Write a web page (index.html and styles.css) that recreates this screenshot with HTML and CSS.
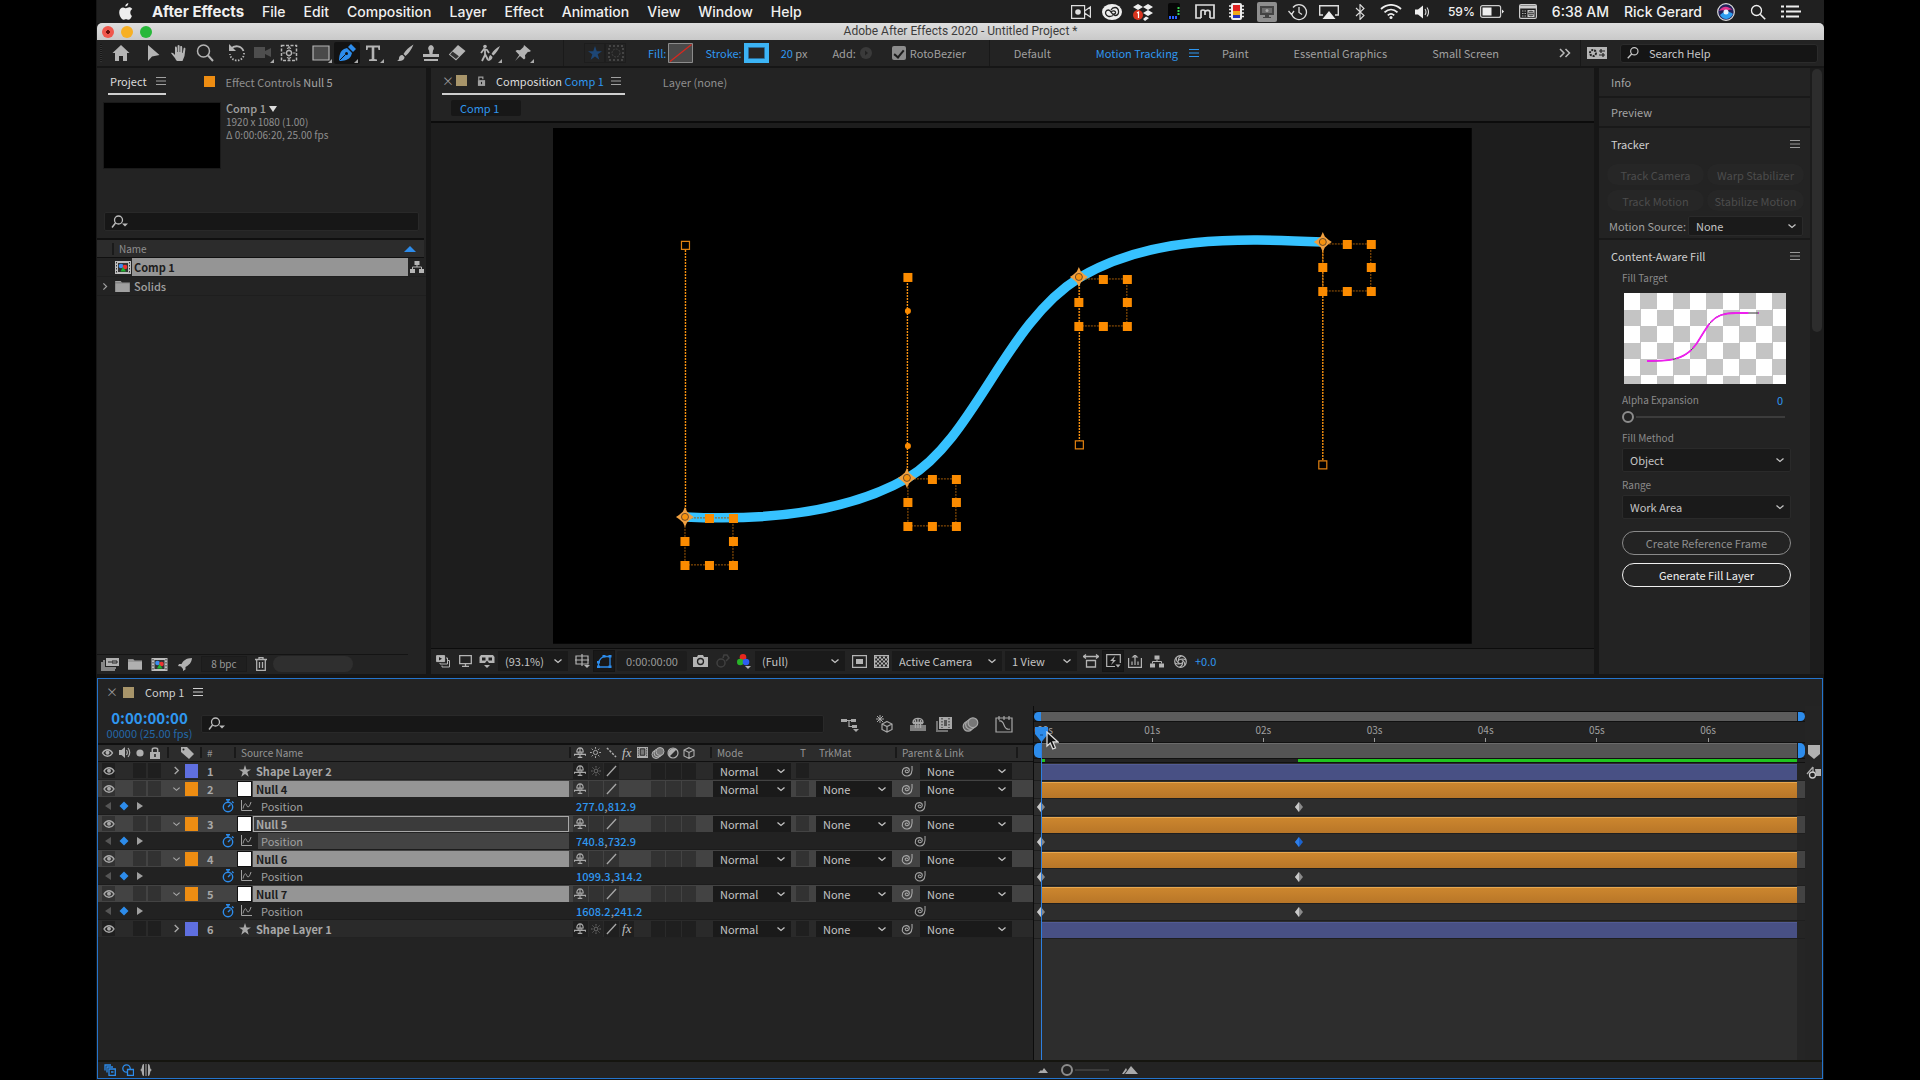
FILE: index.html
```html
<!DOCTYPE html>
<html lang="en">
<head>
<meta charset="utf-8">
<title>Adobe After Effects 2020 - Untitled Project</title>
<link rel="stylesheet" href="styles.css">
</head>
<body>
<svg class="sprite" aria-hidden="true">
  <symbol id="chev" viewBox="0 0 10 10"><path d="M1.500 3.500 5 6.500 8.500 3.500" fill="none" stroke="currentColor" stroke-width="1.300"/></symbol>
  <symbol id="chev-r" viewBox="0 0 10 10"><path d="M3 1 7 5 3 9" fill="none" stroke="currentColor" stroke-width="1.500"/></symbol>
  <symbol id="menu" viewBox="0 0 10 10"><path d="M0 1.500h10M0 5h10M0 8.500h10" stroke="currentColor"/></symbol>
  <symbol id="mag" viewBox="0 0 16 16"><circle cx="9.500" cy="6" r="4.200" fill="none" stroke="currentColor" stroke-width="1.300"/><path d="M6.500 9.200 2 14" stroke="currentColor" stroke-width="1.500"/></symbol>
  <symbol id="magdrop" viewBox="0 0 18 16"><circle cx="7.500" cy="6" r="4" fill="none" stroke="currentColor" stroke-width="1.300"/><path d="M4.500 9 1 13.500" stroke="currentColor" stroke-width="1.500"/><path d="M11 9.500h6l-3 3z" fill="currentColor"/></symbol>
  <symbol id="magr" viewBox="0 0 16 16"><circle cx="6.500" cy="6.500" r="5" fill="none" stroke="currentColor" stroke-width="1.300"/><path d="m10.200 10.200 5 5" stroke="currentColor" stroke-width="1.600"/></symbol>
  <symbol id="eye" viewBox="0 0 12 10"><path d="M1 5c2.500-4.300 7.500-4.300 10 0-2.500 4.300-7.500 4.300-10 0z" fill="none" stroke="currentColor" stroke-width="1.400"/><circle cx="6" cy="4.800" r="2" fill="currentColor"/></symbol>
  <symbol id="shy" viewBox="0 0 12 12"><path d="M2.500 5.500C2.500-.5 9.500-.5 9.500 5.500zM0 9.500V8h12v1.500M6 1v10.500M4 5.500V8M8 5.500V8M3.500 11.300h5" fill="none" stroke="currentColor" stroke-width="1.200"/></symbol>
  <symbol id="sun" viewBox="0 0 12 12"><circle cx="6" cy="6" r="2.300" fill="none" stroke="currentColor"/><path d="M6 0v2M6 10v2M0 6h2M10 6h2M1.800 1.800l1.400 1.400M8.800 8.800l1.400 1.400M10.200 1.800 8.800 3.200M3.200 8.800 1.800 10.200" stroke="currentColor"/></symbol>
  <symbol id="slash" viewBox="0 0 12 12"><path d="M1 11.500 11 .5" stroke="currentColor" stroke-width="1.400"/></symbol>
  <symbol id="bslash" viewBox="0 0 12 12"><path d="m1 1 10 10" stroke="currentColor" stroke-width="1.600" stroke-dasharray="2.500 1.500"/></symbol>
  <symbol id="film" viewBox="0 0 14 12"><path d="M1 0h12v12H1z" fill="currentColor"/><path d="M4.500 2h5v7h-5z" fill="#777" stroke="#222"/><path d="M2.500 1v10M11.500 1v10" stroke="#222" stroke-dasharray="1 1"/></symbol>
  <symbol id="blur" viewBox="0 0 14 12"><circle cx="5" cy="7.500" r="4" fill="#666" stroke="currentColor"/><circle cx="7" cy="6" r="4" fill="#666" stroke="currentColor"/><circle cx="9" cy="4.500" r="4" fill="#777" stroke="currentColor"/></symbol>
  <symbol id="half" viewBox="0 0 12 12"><circle cx="6" cy="6" r="5" fill="none" stroke="currentColor" stroke-width="1.200"/><path d="M2.500 9.500A5 5 0 0 1 9.500 2.500z" fill="currentColor"/></symbol>
  <symbol id="cube" viewBox="0 0 12 12"><path d="M6 .7 11 3v6L6 11.400 1 9V3zM1 3l5 2.500L11 3M6 5.500v6" fill="none" stroke="currentColor" stroke-width="1.100"/></symbol>
  <symbol id="spiral" viewBox="0 0 14 12"><path d="M7.500 6c0-1.600-2.600-1.200-2.300.5.400 2 4.100 1.500 4.100-1.300C9.300 2 4 1.500 2.600 5 1.200 9 4.500 11.300 7.500 11 11.500 10.500 12.500 6 12 1" fill="none" stroke="currentColor" stroke-width="1.100"/></symbol>
  <symbol id="watch" viewBox="0 0 12 14"><circle cx="6" cy="8" r="4.700" fill="none" stroke="currentColor" stroke-width="1.400"/><path d="M4 .8h4M6 1v2.500M6 8l2.500-2.500M10 2.500l1.500 1.500" stroke="currentColor" stroke-width="1.400"/></symbol>
  <symbol id="graph" viewBox="0 0 12 12"><path d="M1.500 0v10.500H12M3 8.500C5 1 6 4 7 6s2.500 1 4-4" fill="none" stroke="currentColor"/></symbol>
  <symbol id="star" viewBox="0 0 12 12"><path d="m6 0 1.500 4.400H12L8.300 7.100 9.700 11.700 6 8.900 2.300 11.700 3.700 7.100 0 4.400h4.500z" fill="currentColor"/></symbol>
  <symbol id="prev" viewBox="0 0 8 10"><path d="M7 1v8L1 5z" fill="currentColor"/></symbol>
  <symbol id="next" viewBox="0 0 8 10"><path d="M1 1v8l6-4z" fill="currentColor"/></symbol>
  <symbol id="dia" viewBox="0 0 10 10"><path d="m5 .5 4.500 4.500L5 9.500.5 5z" fill="currentColor"/></symbol>
  <symbol id="key" viewBox="0 0 10 10"><path d="M5 0 9 5 5 10 1 5z" fill="#8a8a8a"/><path d="M5 0v10L1 5z" fill="#c8c8c8"/></symbol>
  <symbol id="keyblue" viewBox="0 0 10 10"><path d="M5 0 9 5 5 10 1 5z" fill="#1b63cf"/><path d="M5 0v10L1 5z" fill="#2f7fe8"/></symbol>
  <symbol id="folder" viewBox="0 0 16 12"><path d="M0 0h6l1.500 1.500H16V12H0z" fill="currentColor"/><path d="M0 2h16" stroke="#555" stroke-width=".6"/></symbol>
  <symbol id="comp" viewBox="0 0 16 13"><path d="M0 0h16v13H0z" fill="#bdbdbd"/><path d="M3 2h10v9H3z" fill="#333"/><circle cx="6" cy="5" r="2.300" fill="#3a8cf0"/><circle cx="10" cy="6" r="2.300" fill="#e33"/><path d="M5.500 10.500 8 6l3 4.500z" fill="#1eb42d"/><path d="M1.500 1v12M14.500 1v12" stroke="#333" stroke-dasharray="1.500 1.500"/></symbol>
  <symbol id="tree" viewBox="0 0 14 12"><path d="M4.500 0h5v4h-5zM0 8h5v4H0zM9 8h5v4H9z" fill="currentColor"/><path d="M7 4v2M2.500 8V6h9v2" fill="none" stroke="currentColor"/></symbol>
  <symbol id="lock-open" viewBox="0 0 10 12"><path d="M1 5h8v6.500H1z" fill="currentColor"/><path d="M2 5V1.700h4.500V4" fill="none" stroke="currentColor" stroke-width="1.300"/><path d="M5 7v2.500" stroke="#222" stroke-width="1.200"/></symbol>
</svg>

<div class="app">
  <header class="menubar">
    <nav class="menus" aria-label="Menu bar">
      <button class="apple" aria-label="Apple"><svg viewBox="0 0 14 17"><path d="M9.300 0c.2 1.800-1.300 3.600-3 3.600C6.100 1.900 7.600.3 9.300 0zM12.900 12.900c-.8 2-2.100 3.900-3.400 3.900-1 0-1.300-.6-2.500-.6s-1.600.6-2.500.6C2.600 16.800.2 12.900.2 9.300c0-3.200 2-4.900 3.900-4.900 1.200 0 2.200.8 2.900.8s1.900-.9 3.300-.9c1 0 2.200.5 3 1.700-2.800 1.600-2.300 5.700-.4 6.900z" fill="#eee"/></svg></button>
      <button class="appname">After Effects</button><button>File</button><button>Edit</button><button>Composition</button><button>Layer</button><button>Effect</button><button>Animation</button><button>View</button><button>Window</button><button>Help</button>
    </nav>
    <div class="status">
      <span class="st"><svg width="20" height="14" viewBox="0 0 20 14"><path d="M.6.6h13v12.800H.6z M13.600 6l5.800-4v10l-5.800-4" fill="none" stroke="#ddd" stroke-width="1.200"/><circle cx="7" cy="7" r="2.800" fill="#ddd"/></svg></span>
      <span class="st"><svg width="20" height="16" viewBox="0 0 20 16"><ellipse cx="10" cy="8" rx="10" ry="8" fill="#eee"/><path d="M11 11.500C3.500 15.500 1 6 6.500 6c2.500 0 3.500 5.500 6.500 5.500 5.500 0 4-8 0-8-2 0-3.200 1-4 2.500M9 8.500c1-2.500 5-2 4.500.5-.3 1-1.500 1-2 .5" fill="none" stroke="#222" stroke-width="1.300"/></svg></span>
      <span class="st"><svg width="20" height="18" viewBox="0 0 20 18"><path d="m5 1 5 3-5 3-5-3zM15 1l5 3-5 3-5-3zM15 7l5 3-5 3-5-3zM13 13.500l3 1.500-4 3-2-2z" fill="#eee"/><circle cx="5" cy="12" r="5" fill="#d8341e"/><path d="m4 10 1.500-1v6" fill="none" stroke="#fff" stroke-width="1.200"/></svg></span>
      <span class="st"><svg width="16" height="17" viewBox="0 0 16 17"><rect x="2" width="12" height="17" rx="2" fill="#070707"/><path d="M12.500 4v9" stroke="#39d353" stroke-width="2" stroke-dasharray="2 1"/><path d="M3 14.500h8" stroke="#2c63ff" stroke-width="3" stroke-dasharray="2 1"/></svg></span>
      <span class="st"><svg width="20" height="15" viewBox="0 0 20 15"><path d="M6 14H1V1h18v13h-4M6 14V7.500c0-2 4-2 4 0v3.500M10 8c1-2.500 5-2 5 0v6" fill="none" stroke="#ddd" stroke-width="1.700"/></svg></span>
      <span class="st"><svg width="15" height="17" viewBox="0 0 15 17"><path d="M0 3h15M0 6.500h15M0 10h15M0 13.500h15" stroke="#eee" stroke-width="1.500"/><rect x="2" width="11" height="17" rx="2" fill="#eee"/><path d="M4 2h7v6H4z" fill="#e02020"/><path d="M4 8h7v4H4z" fill="#f0a818"/><path d="M4 12h7v3H4z" fill="#2430b8"/></svg></span>
      <span class="st"><svg width="20" height="20" viewBox="0 0 20 20"><rect width="20" height="20" rx="2" fill="#8e8e8e"/><path d="M3 4h14v9H3zM8 13h4v2H8zM6 15h8v1H6z" fill="#444"/><path d="M5 6h10v5H5z" fill="#6d6d6d"/><circle cx="10" cy="8.500" r="1.500" fill="#aaa"/></svg></span>
      <span class="st"><svg width="20" height="18" viewBox="0 0 20 18"><path d="M3.500 10A7.500 7.500 0 1 0 5 4.500M11 4v5.500l3 2M.5 8l3 3.500L6 8" fill="none" stroke="#ddd" stroke-width="1.300"/></svg></span>
      <span class="st"><svg width="20" height="14" viewBox="0 0 20 14"><path d="M4 10H.7V.7h18.600V10H16" fill="none" stroke="#ddd" stroke-width="1.400"/><path d="m10 6 6.500 8h-13z" fill="#eee"/></svg></span>
      <span class="st"><svg width="10" height="16" viewBox="0 0 10 16"><path d="m1 4 8 7.500L5 15.500V.5L9 4.500 1 12" fill="none" stroke="#ddd" stroke-width="1.100"/></svg></span>
      <span class="st"><svg width="22" height="15" viewBox="0 0 22 15"><path d="M1 5c6-5.500 14-5.500 20 0M4.500 8.300c4-3.700 9-3.700 13 0M7.800 11.300c2-1.800 4.400-1.800 6.400 0" fill="none" stroke="#eee" stroke-width="1.800"/><circle cx="11" cy="13.500" r="1.500" fill="#eee"/></svg></span>
      <span class="st"><svg width="14" height="14" viewBox="0 0 14 14"><path d="M0 4.500h3l5-4v13l-5-4H0z" fill="#eee"/><path d="M10 4c1.300 2 1.300 4 0 6M12 2.500c2 3 2 6 0 9" fill="none" stroke="#ddd" stroke-width="1.100"/></svg></span>
      <span class="battery">59%<svg width="24" height="13" viewBox="0 0 24 13"><rect x=".6" y=".6" width="20" height="11.800" rx="2" fill="none" stroke="#ccc" stroke-width="1.200"/><path d="M2.500 2.500h9v8h-9zM22 4.500l2 2-2 2z" fill="#eee"/></svg></span>
      <svg width="18" height="15" viewBox="0 0 18 15"><rect x=".6" y=".6" width="16.800" height="13.800" rx="1.500" fill="none" stroke="#ccc" stroke-width="1.200"/><path d="M1 3h16" stroke="#ccc" stroke-width="3"/><path d="M3 7h4M3 9.500h4M3 12h4" stroke="#aaa" stroke-dasharray="1.500 1"/><path d="M8.500 6h7v7h-7z" fill="#ccc"/><path d="M10 7.500h4v4h-4zM12 6.500v6M9 9.500h6" fill="none" stroke="#333" stroke-width=".7"/></svg>
      <span>6:38 AM</span>
      <span>Rick Gerard</span>
      <svg width="18" height="18" viewBox="0 0 18 18"><circle cx="9" cy="9" r="8.300" fill="#23235c" stroke="#ddd" stroke-width="1.200"/><path d="M2 8c4-6 9-5 14-1-4-1-5 0-7 2-2-2-4-2-7-1z" fill="#e0348e"/><path d="M3 12c4-4 5-3 6-3s3-1 7 2c-2 4-5 5-7 5s-4-1-6-4z" fill="#2c9df0"/><circle cx="9" cy="9" r="2.500" fill="#e8f4ff"/></svg>
      <svg width="16" height="16"><use href="#magr"/></svg>
      <svg width="20" height="13" viewBox="0 0 20 13"><path d="M0 1.500h3M0 6.500h3M0 11.500h3M5 1.500h13M5 6.500h15M5 11.500h13" stroke="#eee" stroke-width="2"/></svg>
    </div>
  </header>

  <div class="titlebar">
    <div class="lights"><i class="red"></i><i class="amber"></i><i class="green"></i></div>
    <h1>Adobe After Effects 2020 - Untitled Project *</h1>
  </div>

  <div class="toolbar">
    <div class="tools">
      <i class="grip"></i>
      <div class="tg"><button aria-label="Home"><svg viewBox="0 0 18 18"><path d="m9 1 8.500 8H15v8h-4v-5H7v5H3V9H.5z" fill="currentColor"/></svg></button></div>
      <div class="tg"><button aria-label="Selection"><svg viewBox="0 0 18 18"><path d="M4 1v16l4-4.500L15.500 11z" fill="currentColor"/></svg></button><button aria-label="Hand"><svg viewBox="0 0 18 18"><path d="M6 16c-1-2.500-3-4-5-7 1.500-1 3 1 4 2V3c1.200-1 1.800 0 2 1v4h.6V1.500c1-1 1.900-.5 2 .5v6h.6V2.500c1-1 1.900-.3 2 .7V9h.5l1-5c1-.7 1.800 0 1.700 1L14.500 12 12.500 17H7z" fill="currentColor"/></svg></button><button aria-label="Zoom"><svg viewBox="0 0 18 18"><circle cx="7.500" cy="7" r="6" fill="none" stroke="currentColor" stroke-width="1.500"/><path d="m12 11.500 5 5.500" stroke="currentColor" stroke-width="2"/></svg></button></div>
      <div class="tg"><button aria-label="Rotate"><svg viewBox="0 0 18 18"><path d="M3 5A7.300 7.300 0 0 1 15.500 7" fill="none" stroke="currentColor" stroke-width="1.800"/><path d="M1 0v7h7z" fill="currentColor"/><path d="M16 9A7 7 0 0 1 2 10" fill="none" stroke="currentColor" stroke-width="1.800" stroke-dasharray="1.500 1.500"/></svg></button><button class="dim more" aria-label="Camera"><svg viewBox="0 0 18 18"><path d="M0 3h11v4l6-3v9l-6-3v4H0z" fill="currentColor"/></svg></button><button aria-label="Pan behind"><svg viewBox="0 0 18 18"><path d="M1.500 1.500h15v15h-15z" fill="none" stroke="currentColor" stroke-width="1.500" stroke-dasharray="3 1.500"/><circle cx="9" cy="9" r="2.500" fill="none" stroke="currentColor" stroke-width="1.300"/><path d="M9 2.500v3M9 12.500v3M2.500 9h3M12.500 9h3M7 5l2-2.500L11 5M7 13l2 2.500 2-2.500" fill="none" stroke="currentColor"/></svg></button></div>
      <div class="tg"><button class="more" aria-label="Rectangle"><svg viewBox="0 0 18 18"><path d="M1 2h16v14H1z" fill="#4a4a4a" stroke="currentColor" stroke-width="1.200"/></svg></button><button class="more on" aria-label="Pen"><svg viewBox="0 0 18 18"><path d="M1 17C1 12 2 7 6 5l3-1 5 5-1 3c-2 4-7 5-12 5z" fill="currentColor"/><path d="m10 3 3-3 5 5-3 3z" fill="currentColor"/><path d="m1.500 16.500 6-6" stroke="#111"/><circle cx="8.500" cy="9.500" r="1.500" fill="#111"/></svg></button><button class="more" aria-label="Type"><svg viewBox="0 0 18 18"><path d="M2 1.500h14V6h-1.500L14 3.500h-3.700V15l2.700.6V17H5v-1.400l2.700-.6V3.500H4L3.500 6H2z" fill="currentColor"/></svg></button></div>
      <div class="tg"><button aria-label="Brush"><svg viewBox="0 0 18 18"><path d="M17.500.5c-5 3-8 6-10 9.500l2 2c3.500-3 6-6.500 8-11.500zM6.500 11l2 2c0 3-3 4.500-7.500 4 2-1 2-2 2-3 0-2 2-3.500 3.500-3z" fill="currentColor"/></svg></button><button aria-label="Clone stamp"><svg viewBox="0 0 18 18"><path d="M9 1a3.300 3.300 0 0 1 2 5.500L10.500 10H17v3H1v-3h6.500L7 6.500A3.300 3.300 0 0 1 9 1zM2 15h14v2H2z" fill="currentColor"/></svg></button><button aria-label="Eraser"><svg viewBox="0 0 18 18"><path d="m10 1 7.500 6L8 16.500.8 10.500z" fill="currentColor"/><path d="M4.600 7.500 2.200 10.500l5.800 4.600 2.900-2.800z" fill="#333"/></svg></button></div>
      <div class="tg wide"><button class="more" aria-label="Roto brush"><svg viewBox="0 0 22 18"><circle cx="6" cy="2.500" r="1.800" fill="currentColor"/><path d="m2 9 3-4 3 1 2 3M6 6v5l-3 6M6 10l3 6" fill="none" stroke="currentColor" stroke-width="1.800"/><path d="M21 2c-4 2-7 5-8.500 8l2 1.500C17 9 19.500 6 21 2zM11.500 11l2 2c0 2-2 4-5 4 1.500-1 1-5 3-6z" fill="currentColor"/></svg></button></div>
      <div class="tg"><button class="more" aria-label="Puppet pin"><svg viewBox="0 0 18 18"><path d="m10 1 7 6-2 1-1-.3-3 3.500.3 3-1.300 1.300-4-3.500-5 5 4.300-6L1.500 7 3 6l3 .2L9.500 3z" fill="currentColor"/></svg></button></div>
    </div>
    <div class="options">
      <div class="modes"><button aria-label="Shape mode"><svg width="14" height="14"><use href="#star"/></svg></button><button class="mask" aria-label="Mask mode"><svg width="16" height="16" viewBox="0 0 16 16"><path d="M1 1h14v14H1z" fill="none" stroke="currentColor" stroke-width="2" stroke-dasharray="2 2"/><circle cx="8" cy="8" r="4" fill="none" stroke="currentColor" stroke-dasharray="2 1"/></svg></button></div>
      <button class="swatchbtn">Fill:<svg width="25" height="20" viewBox="0 0 25 20"><path d="M.5.5h24v19H.5z" fill="#4a4a4a" stroke="#8c8c8c"/><path d="M2 18.500 23.500 1.500" stroke="#d8281e" stroke-width="1.300"/></svg></button>
      <button class="swatchbtn">Stroke:<svg width="25" height="20" viewBox="0 0 25 20"><path d="M2.500 2.500h20v15h-20z" fill="#262626" stroke="#3cb4f5" stroke-width="5"/><path d="M4.500 4.500h16v11h-16z" fill="none" stroke="#2a6f9c"/></svg></button>
      <span class="px"><a href="#">20</a> px</span>
      <span class="add">Add:<svg width="12" height="12" viewBox="0 0 12 12"><circle cx="6" cy="6" r="6" fill="#3a3a3a"/><path d="m5 3.500 3 2.500-3 2.500z" fill="#222"/></svg></span>
      <label class="check"><input type="checkbox" checked>RotoBezier</label>
    </div>
    <nav class="spaces" aria-label="Workspaces">
      <a href="#">Default</a><a href="#" class="cur">Motion Tracking<svg width="10" height="10"><use href="#menu"/></svg></a><a href="#">Paint</a><a href="#">Essential Graphics</a><a href="#">Small Screen</a>
      <button class="overflow" aria-label="More workspaces"><svg width="12" height="10" viewBox="0 0 12 10"><path d="m1 1 4 4-4 4M6.500 1l4 4-4 4" fill="none" stroke="currentColor" stroke-width="1.500"/></svg></button>
    </nav>
    <div class="help">
      <svg width="20" height="12" viewBox="0 0 20 12"><path d="M0 0h20v12H0z" fill="#b5b5b5"/><circle cx="6" cy="6" r="3" fill="none" stroke="#222" stroke-width="2" stroke-dasharray="2 1"/><path d="M12 4h6M12 8h6M14 2v4M16 6v4" stroke="#222" stroke-width="1.200"/></svg>
      <label class="search"><svg width="14" height="14"><use href="#mag"/></svg><input type="text" placeholder="Search Help" aria-label="Search Help"></label>
    </div>
  </div>

  <main class="workspace">
    <section class="panel project">
      <div class="tabs"><div class="tab active first">Project<svg width="10" height="10"><use href="#menu"/></svg></div><div class="tab fxtab"><i class="sq orange"></i><span>Effect Controls <b>Null 5</b></span></div></div>
      <div class="info"><div class="thumb"></div><div><p class="strong">Comp 1<svg width="8" height="8" viewBox="0 0 8 8"><path d="M0 1h8L4 7z" fill="#ddd"/></svg></p><p>1920 x 1080 (1.00)</p><p>Δ 0:00:06:20, 25.00 fps</p></div></div>
      <label class="field find"><svg width="18" height="16"><use href="#magdrop"/></svg><input type="text" aria-label="Search project"></label>
      <div class="listhead"><span>Name</span><svg width="12" height="6" viewBox="0 0 12 6"><path d="M6 0l6 6H0z" fill="#2d8ceb"/></svg></div>
      <ul class="items">
        <li class="sel"><span class="tw"></span><svg width="16" height="13"><use href="#comp"/></svg><span class="nm">Comp 1</span><svg class="flow" width="14" height="12"><use href="#tree"/></svg></li>
        <li><svg class="tw" width="8" height="9"><use href="#chev-r"/></svg><svg width="15" height="11"><use href="#folder"/></svg><span class="nm">Solids</span><span class="flow"></span></li>
      </ul>
      <div class="pfoot">
        <button aria-label="Interpret footage"><svg width="18" height="13" viewBox="0 0 18 13"><path d="M0 4h3v6h11v3H0zM2 2h2v7h11v2H2z" fill="currentColor" opacity=".7"/><path d="M5 0h13v8H5z" fill="currentColor"/><path d="M7 4h3M11 3h5v2h-5z" fill="none" stroke="#222"/></svg></button><button aria-label="New folder"><svg width="14" height="11"><use href="#folder"/></svg></button><button aria-label="New composition"><svg width="17" height="13"><use href="#comp"/></svg></button><button aria-label="Adjust"><svg width="14" height="13" viewBox="0 0 14 13"><path d="M14 0C8 0 5 3 3.500 6H1L0 8l3 .5L5 11v2l2.500-1.500V9C11 7 13.500 5 14 0z" fill="currentColor"/></svg></button>
        <button class="bpc">8 bpc</button>
        <button aria-label="Delete"><svg width="12" height="14" viewBox="0 0 12 14"><path d="M0 2.500h12M4 2.500V.7h4v1.800M1.700 3v10.300h8.600V3M4.500 5v6M7.500 5v6" fill="none" stroke="currentColor" stroke-width="1.300"/></svg></button>
        <i class="hscroll"></i>
      </div>
    </section>

    <section class="panel viewerpanel">
      <div class="tabs"><div class="tab active comp"><span class="x">×</span><i class="sq sand"></i><svg width="9" height="12"><use href="#lock-open"/></svg><span>Composition <a href="#">Comp 1</a></span><svg width="10" height="10"><use href="#menu"/></svg></div><div class="tab">Layer (none)</div></div>
      <div class="crumb"><button>Comp 1</button></div>
      <div class="viewer">
        <svg viewBox="553 128 919 516" class="canvas">
          <defs>
            <g id="nul"><path d="M0 1h48v47H0z" fill="none" stroke="#a35a06" stroke-dasharray="2 1"/><path d="M20-3h9v9h-9zM44-3h9v9h-9zM-4.500 20h9v9h-9zM44 20h9v9h-9zM-4.500 44h9v9h-9zM20 44h9v9h-9zM44 44h9v9h-9z" fill="#fb8b00"/></g>
            <g id="anchor"><path d="m0-10 2 4.500L6-2 9 0 6 2 2 5.500 0 10-2 5.500-6 2-9 0l3-2 4-3.500z" fill="#f0a040"/><circle r="3.500" fill="#f7930f" stroke="#6b4a2a"/></g>
          </defs>
          <path d="M553 128h919v516H553z" fill="#000"/>
          <path d="M685 517C765 521 845 514 908 478 975 438 1005 324 1079 278 1150 236 1235 238 1323 242" fill="none" stroke="#36c2ff" stroke-width="9.500"/>
          <path d="M685.500 250V517M907.500 280V478M1079.500 278V441M1323 242V461" stroke="#f7900f" stroke-width="1.400" stroke-dasharray="2 1"/>
          <use href="#nul" x="685" y="517"/><use href="#nul" x="908" y="478"/><use href="#nul" x="1079" y="278"/><use href="#nul" x="1323" y="243"/>
          <use href="#anchor" x="685" y="517"/><use href="#anchor" x="907" y="478"/><use href="#anchor" x="1079" y="277"/><use href="#anchor" x="1323" y="242"/>
          <path d="M681.500 241.500h8v8h-8zM1075.500 441h8v8h-8zM1319 461h8v8h-8z" fill="none" stroke="#e08010" stroke-width="1.200"/>
          <path d="M903.500 273h9v9h-9z" fill="#fb8b00"/><circle cx="908" cy="311" r="3" fill="#fb8b00"/><circle cx="908" cy="446" r="3" fill="#fb8b00"/>
        </svg>
      </div>
      <div class="vfoot">
        <button aria-label="Always preview"><svg width="14" height="13" viewBox="0 0 14 13"><path d="M.6.6h8v6h-8z" fill="currentColor" stroke="currentColor"/><path d="m3 2 3 1.700L3 5.500z" fill="#222"/><path d="M10 3h1.500v6H4V8M12 5.500h1.500V12H6v-1.500" fill="none" stroke="currentColor"/></svg></button><button aria-label="Primary viewer"><svg width="13" height="12" viewBox="0 0 13 12"><path d="M.7.7h11.600v8H.7zM6.500 9v2M3 11.300h7" fill="none" stroke="currentColor" stroke-width="1.300"/></svg></button><button aria-label="VR"><svg width="16" height="14" viewBox="0 0 16 14"><path d="M2 1h12l1.500 2v6H10L8 6.500 6 9H.5V3zM5 11h6l-3 3z" fill="currentColor"/><path d="M3 3.500h3.500v3H3zM9.500 3.500H13v3H9.500z" fill="#222"/></svg></button>
        <span class="select w70"><select aria-label="Magnification"><option>(93.1%)</option></select><svg><use href="#chev"/></svg></span>
        <button aria-label="Guides"><svg width="15" height="15" viewBox="0 0 15 15"><path d="M1 2h12v8H1zM7 0v12M0 6h14" fill="none" stroke="currentColor" stroke-width="1.200"/><path d="M9 11h6l-3 3z" fill="currentColor"/></svg></button><button class="boxed" aria-label="Mask visibility"><svg width="15" height="13" viewBox="0 0 15 13"><path d="M1.500 12V7C3 4 4 2.500 7 1.500h6V12z" fill="none" stroke="#2d8ceb" stroke-width="1.300"/><path d="M0 10.500h3v2.500H0zM11.500 10.500h3V13h-3zM11.500 0h3v2.500h-3zM5.500 0h3v2.500h-3zM0 6h3v2.500H0z" fill="#2d8ceb"/></svg></button>
        <span class="box time">0:00:00:00</span>
        <button aria-label="Snapshot"><svg width="15" height="12" viewBox="0 0 15 12"><path d="M0 2h4l1-2h5l1 2h4v10H0z" fill="currentColor"/><circle cx="7.500" cy="6.500" r="3" fill="none" stroke="#222" stroke-width="1.300"/></svg></button><button class="dim" aria-label="Show snapshot"><svg width="15" height="14" viewBox="0 0 15 14"><circle cx="6" cy="9" r="4" fill="none" stroke="currentColor" stroke-width="1.500"/><path d="M8 4 9 1h3l2 3-3 3" fill="none" stroke="currentColor" stroke-width="1.500"/></svg></button><button aria-label="Channels"><svg width="15" height="15" viewBox="0 0 15 15"><circle cx="6" cy="3.300" r="3.300" fill="#e8281e"/><circle cx="3.300" cy="8" r="3.300" fill="#28b428"/><circle cx="9" cy="8" r="3.300" fill="#2c5cf0"/><path d="M8 12h6l-3 3z" fill="currentColor"/></svg></button>
        <span class="select w90"><select aria-label="Resolution"><option>(Full)</option></select><svg><use href="#chev"/></svg></span>
        <button aria-label="Region"><svg width="15" height="13" viewBox="0 0 15 13"><path d="M.6.6h13.800v11.800H.6z" fill="none" stroke="currentColor" stroke-width="1.200"/><path d="M4 4h7v5H4z" fill="currentColor"/></svg></button><button aria-label="Transparency"><svg width="15" height="13" viewBox="0 0 15 13"><path d="M.6.6h13.800v11.800H.6z" fill="none" stroke="currentColor" stroke-width="1.200"/><path d="M1 2.500h13M1 6.500h13M1 10.500h13" stroke="currentColor" stroke-width="2" stroke-dasharray="2 2"/><path d="M3 4.500h11M3 8.500h11" stroke="currentColor" stroke-width="2" stroke-dasharray="2 2"/></svg></button>
        <span class="select w110"><select aria-label="Camera view"><option>Active Camera</option></select><svg><use href="#chev"/></svg></span>
        <span class="select w72"><select aria-label="View layout"><option>1 View</option></select><svg><use href="#chev"/></svg></span>
        <button aria-label="Pixel aspect"><svg width="16" height="14" viewBox="0 0 16 14"><path d="M3.500 6.500h9v6.500h-9zM0 2.500h16M3 .5.5 2.500 3 4.500M13 .5l2.500 2-2.500 2" fill="none" stroke="currentColor" stroke-width="1.300"/></svg></button><button class="boxed" aria-label="Fast previews"><svg width="15" height="14" viewBox="0 0 15 14"><path d="M9 12.500H.7V.7h13.600V9" fill="none" stroke="currentColor" stroke-width="1.200"/><path d="M9 2 4 7h3l-2 4 5-5H7.500z" fill="currentColor"/><path d="M9.500 10.500h5l-2.500 3z" fill="currentColor"/></svg></button><button aria-label="Timeline"><svg width="14" height="13" viewBox="0 0 14 13"><path d="M.6 3v9.400h12.800V3M4 6.500V10M7 2v8M10 6.500V10M5 2l2-2 2 2z" fill="none" stroke="currentColor" stroke-width="1.200"/></svg></button><button aria-label="Flowchart"><svg width="14" height="13"><use href="#tree"/></svg></button>
        <button class="exposure"><svg width="13" height="13" viewBox="0 0 13 13"><circle cx="6.500" cy="6.500" r="5.800" fill="none" stroke="currentColor" stroke-width="1.200"/><path d="M7.500.8C5 2 4 3.500 4.500 6.500M12 5C9.500 3.500 7.500 3.500 5 5M10.800 10.500C11 7.700 10 6 7.500 4.500M5.500 12.200C8 11 9 9.500 8.500 6.500M1 8c2.500 1.500 4.500 1.500 7 0M2.200 2.500C2 5.300 3 7 5.500 8.500" fill="none" stroke="currentColor" stroke-width="1.100"/></svg><span>+0.0</span></button>
      </div>
    </section>

    <aside class="side">
      <div class="stack">
        <h2 class="closed">Info</h2>
        <h2 class="closed">Preview</h2>
        <section class="tracker">
          <h2>Tracker<svg width="10" height="10"><use href="#menu"/></svg></h2>
          <div class="btns"><button disabled>Track Camera</button><button disabled>Warp Stabilizer</button><button disabled>Track Motion</button><button disabled>Stabilize Motion</button></div>
          <div class="source"><label for="ms">Motion Source:</label><span class="select"><select id="ms"><option>None</option></select><svg><use href="#chev"/></svg></span></div>
        </section>
        <section class="caf">
          <h2>Content-Aware Fill<svg width="10" height="10"><use href="#menu"/></svg></h2>
          <div class="cafbody">
            <p>Fill Target</p>
            <svg class="target" viewBox="0 0 162 91"><path d="M23 68C50 68 62 66 73 50 86 30 88 20 112 20H135" fill="none" stroke="#333" stroke-width="1"/><path d="M23 68C50 68 62 66 73 50 86 30 88 20 112 20H135" fill="none" stroke="#ee1fee" stroke-width="1.800" stroke-dasharray="26 3 18 2 30 2 40 10"/></svg>
            <div class="alpha"><label for="ae">Alpha Expansion</label><output for="ae">0</output></div>
            <input id="ae" type="range" min="0" max="100" value="0">
            <label for="fm">Fill Method</label>
            <span class="select big"><select id="fm"><option>Object</option></select><svg><use href="#chev"/></svg></span>
            <label for="rg">Range</label>
            <span class="select big"><select id="rg"><option>Work Area</option></select><svg><use href="#chev"/></svg></span>
            <div class="actions"><button class="pill">Create Reference Frame</button>
            <button class="pill hot">Generate Fill Layer</button></div>
          </div>
        </section>
      </div>
      <div class="vscroll"><i></i></div>
    </aside>
  </main>

  <section class="timeline">
    <div class="tltabs"><span class="x">×</span><i class="sq sand"></i><span>Comp 1</span><svg width="10" height="10"><use href="#menu"/></svg></div>
    <div class="tlbody">
      <div class="layers">
        <div class="controls">
          <div class="clock"><strong>0:00:00:00</strong><span>00000 (25.00 fps)</span></div>
          <label class="field"><svg width="18" height="16"><use href="#magdrop"/></svg><input type="text" aria-label="Search layers"></label>
          <div class="sw">
            <button aria-label="Mini-flowchart"><svg width="18" height="15" viewBox="0 0 18 15"><path d="M0 2h6v3H0zM10 2h5v3h-5zM11 8h5v3h-5z" fill="currentColor"/><path d="M4 3.500h8M8 3.500v6h4" fill="none" stroke="currentColor" stroke-width="1.200"/><path d="M12 12h6l-3 3z" fill="currentColor"/></svg></button>
            <button aria-label="Draft 3D"><svg width="18" height="18" viewBox="0 0 18 18"><path d="m12 6.500 5 2.500v5.500l-5 2.500-5-2.500V9zM7 9l5 2.500L17 9M12 11.500V17" fill="none" stroke="currentColor" stroke-width="1.200"/><path d="M5 0v8M1 4h8M2 1l6 6M8 1 2 7" stroke="currentColor"/></svg></button>
            <button aria-label="Hide shy"><svg width="16" height="14" viewBox="0 0 16 14"><path d="M0 8h16v6H0z" fill="currentColor" opacity=".7"/><path d="M3 5.500C3 0 13 0 13 5.500zM3 6.500h10M8 1v10M5.500 3v8M10.500 3v8" fill="none" stroke="currentColor" stroke-width="1.400"/></svg></button>
            <button aria-label="Frame blending"><svg width="16" height="15" viewBox="0 0 16 15"><path d="M0 4h2v9h10v2H0z" fill="currentColor" opacity=".6"/><path d="M3 0h13v12H3z" fill="currentColor"/><path d="M6 1v10M13 1v10" stroke="#222" stroke-dasharray="1.500 1.500"/><path d="M8 3h3v6H8z" fill="#555"/></svg></button>
            <button aria-label="Motion blur"><svg width="17" height="15"><use href="#blur"/></svg></button>
            <button aria-label="Graph editor"><svg width="18" height="17" viewBox="0 0 18 17"><path d="M1 2h16v14H1zM4 5c3-1 4 1 5 4s3 5 6 4M4 0v4M9 0v4M14 0v4" fill="none" stroke="currentColor" stroke-width="1.200"/></svg></button>
          </div>
        </div>
        <table>
          <colgroup><col class="c19"><col class="c15"><col class="c15"><col class="c20"><col class="c33"><col class="c34"><col class="c335"><col class="c141"><col class="c85"><col class="c19"><col class="c81"><col class="c121"><col class="c17"></colgroup>
          <thead><tr>
            <th><svg width="13" height="10"><use href="#eye"/></svg></th>
            <th><svg width="12" height="11" viewBox="0 0 12 11"><path d="M0 3h2.500L6 0v11L2.500 8H0z" fill="currentColor"/><path d="M7.500 3c1 1.500 1 3.500 0 5M9 1c2.300 3 2.300 6 0 9" fill="none" stroke="currentColor" stroke-width="1.200"/></svg></th>
            <th><svg width="8" height="8" viewBox="0 0 8 8"><circle cx="4" cy="4" r="3.600" fill="currentColor"/></svg></th>
            <th class="lk"><svg width="10" height="12" viewBox="0 0 10 12"><path d="M0 5h10v7H0z" fill="currentColor"/><path d="M2.300 5V2.500c0-2 5.400-2 5.400 0V5" fill="none" stroke="currentColor" stroke-width="1.500"/><path d="M5 7v3" stroke="#222" stroke-width="1.500"/></svg></th>
            <th><div class="hd tag"><svg width="13" height="12" viewBox="0 0 13 12"><path d="M0 0h6l7 7-5 5-8-7z" fill="currentColor"/><circle cx="2.500" cy="2.500" r="1" fill="#222"/></svg></div></th>
            <th><div class="hd">#</div></th>
            <th><div class="hd">Source Name</div></th>
            <th><div class="hd"><div class="switches"><i><svg width="12" height="11"><use href="#shy"/></svg></i><i><svg width="11" height="11"><use href="#sun"/></svg></i><i><svg width="11" height="11"><use href="#bslash"/></svg></i><i class="fx">fx</i><i><svg width="13" height="11"><use href="#film"/></svg></i><i><svg width="14" height="12"><use href="#blur"/></svg></i><i><svg width="12" height="12"><use href="#half"/></svg></i><i><svg width="12" height="12"><use href="#cube"/></svg></i></div></div></th>
            <th><div class="hd">Mode</div></th>
            <th class="tm">T</th>
            <th class="tm">TrkMat</th>
            <th><div class="hd">Parent &amp; Link</div></th>
            <th><div class="hd"></div></th>
          </tr></thead>
          <tbody>
            <tr class="layer"><td><i class="bx"><svg width="12" height="10"><use href="#eye"/></svg></i></td><td></td><td><i class="bx"></i></td><td><i class="bx"></i></td><td><div class="lab"><svg width="9" height="9"><use href="#chev-r"/></svg><i class="chip violet"></i></div></td><td class="num">1</td><td><div class="src"><i class="kind"><svg width="12" height="12"><use href="#star"/></svg></i><span>Shape Layer 2</span></div></td><td><div class="switches"><i class="b"><svg width="12" height="11"><use href="#shy"/></svg></i><i class="b faint"><svg width="10" height="10"><use href="#sun"/></svg></i><i class="b"><svg width="11" height="12"><use href="#slash"/></svg></i><i></i><i></i><i class="b"></i><i class="b"></i><i class="b"></i></div></td><td><span class="select mode"><select aria-label="Mode 1"><option>Normal</option></select><svg><use href="#chev"/></svg></span></td><td><i class="bx"></i></td><td></td><td><div class="parent"><svg width="14" height="12"><use href="#spiral"/></svg><span class="select"><select aria-label="Parent 1"><option>None</option></select><svg><use href="#chev"/></svg></span></div></td><td></td></tr>

            <tr class="layer sel"><td><i class="bx"><svg width="12" height="10"><use href="#eye"/></svg></i></td><td></td><td><i class="bx"></i></td><td><i class="bx"></i></td><td><div class="lab"><svg width="10" height="10"><use href="#chev"/></svg><i class="chip orange"></i></div></td><td class="num">2</td><td><div class="src"><i class="kind null"></i><span class="lit">Null 4</span></div></td><td><div class="switches"><i class="b"><svg width="12" height="11"><use href="#shy"/></svg></i><i class="b"></i><i class="b"><svg width="11" height="12"><use href="#slash"/></svg></i><i></i><i></i><i class="b"></i><i class="b"></i><i class="b"></i></div></td><td><span class="select mode"><select aria-label="Mode 2"><option>Normal</option></select><svg><use href="#chev"/></svg></span></td><td><i class="bx"></i></td><td><span class="select trk"><select aria-label="Matte 2"><option>None</option></select><svg><use href="#chev"/></svg></span></td><td><div class="parent"><svg width="14" height="12"><use href="#spiral"/></svg><span class="select"><select aria-label="Parent 2"><option>None</option></select><svg><use href="#chev"/></svg></span></div></td><td></td></tr>
            <tr class="prop"><td colspan="4"><div class="keys"><svg class="off"><use href="#prev"/></svg><svg class="cur"><use href="#dia"/></svg><svg><use href="#next"/></svg></div></td><td colspan="2"><svg class="sw1" width="12" height="14"><use href="#watch"/></svg></td><td><div class="pn"><svg width="12" height="12"><use href="#graph"/></svg><span>Position</span></div></td><td colspan="4" class="val"><a href="#">277.0</a>,<a href="#">812.9</a></td><td><svg class="pw" width="14" height="12"><use href="#spiral"/></svg></td><td></td></tr>

            <tr class="layer sel"><td><i class="bx"><svg width="12" height="10"><use href="#eye"/></svg></i></td><td></td><td><i class="bx"></i></td><td><i class="bx"></i></td><td><div class="lab"><svg width="10" height="10"><use href="#chev"/></svg><i class="chip orange"></i></div></td><td class="num">3</td><td><div class="src"><i class="kind null"></i><span class="framed">Null 5</span></div></td><td><div class="switches"><i class="b"><svg width="12" height="11"><use href="#shy"/></svg></i><i class="b"></i><i class="b"><svg width="11" height="12"><use href="#slash"/></svg></i><i></i><i></i><i class="b"></i><i class="b"></i><i class="b"></i></div></td><td><span class="select mode"><select aria-label="Mode 3"><option>Normal</option></select><svg><use href="#chev"/></svg></span></td><td><i class="bx"></i></td><td><span class="select trk"><select aria-label="Matte 3"><option>None</option></select><svg><use href="#chev"/></svg></span></td><td><div class="parent"><svg width="14" height="12"><use href="#spiral"/></svg><span class="select"><select aria-label="Parent 3"><option>None</option></select><svg><use href="#chev"/></svg></span></div></td><td></td></tr>
            <tr class="prop"><td colspan="4"><div class="keys"><svg class="off"><use href="#prev"/></svg><svg class="cur"><use href="#dia"/></svg><svg><use href="#next"/></svg></div></td><td colspan="2"><svg class="sw1" width="12" height="14"><use href="#watch"/></svg></td><td><div class="pn picked"><svg width="12" height="12"><use href="#graph"/></svg><span>Position</span></div></td><td colspan="4" class="val"><a href="#">740.8</a>,<a href="#">732.9</a></td><td><svg class="pw" width="14" height="12"><use href="#spiral"/></svg></td><td></td></tr>

            <tr class="layer sel"><td><i class="bx"><svg width="12" height="10"><use href="#eye"/></svg></i></td><td></td><td><i class="bx"></i></td><td><i class="bx"></i></td><td><div class="lab"><svg width="10" height="10"><use href="#chev"/></svg><i class="chip orange"></i></div></td><td class="num">4</td><td><div class="src"><i class="kind null"></i><span class="lit">Null 6</span></div></td><td><div class="switches"><i class="b"><svg width="12" height="11"><use href="#shy"/></svg></i><i class="b"></i><i class="b"><svg width="11" height="12"><use href="#slash"/></svg></i><i></i><i></i><i class="b"></i><i class="b"></i><i class="b"></i></div></td><td><span class="select mode"><select aria-label="Mode 4"><option>Normal</option></select><svg><use href="#chev"/></svg></span></td><td><i class="bx"></i></td><td><span class="select trk"><select aria-label="Matte 4"><option>None</option></select><svg><use href="#chev"/></svg></span></td><td><div class="parent"><svg width="14" height="12"><use href="#spiral"/></svg><span class="select"><select aria-label="Parent 4"><option>None</option></select><svg><use href="#chev"/></svg></span></div></td><td></td></tr>
            <tr class="prop"><td colspan="4"><div class="keys"><svg class="off"><use href="#prev"/></svg><svg class="cur"><use href="#dia"/></svg><svg><use href="#next"/></svg></div></td><td colspan="2"><svg class="sw1" width="12" height="14"><use href="#watch"/></svg></td><td><div class="pn"><svg width="12" height="12"><use href="#graph"/></svg><span>Position</span></div></td><td colspan="4" class="val"><a href="#">1099.3</a>,<a href="#">314.2</a></td><td><svg class="pw" width="14" height="12"><use href="#spiral"/></svg></td><td></td></tr>

            <tr class="layer sel"><td><i class="bx"><svg width="12" height="10"><use href="#eye"/></svg></i></td><td></td><td><i class="bx"></i></td><td><i class="bx"></i></td><td><div class="lab"><svg width="10" height="10"><use href="#chev"/></svg><i class="chip orange"></i></div></td><td class="num">5</td><td><div class="src"><i class="kind null"></i><span class="lit">Null 7</span></div></td><td><div class="switches"><i class="b"><svg width="12" height="11"><use href="#shy"/></svg></i><i class="b"></i><i class="b"><svg width="11" height="12"><use href="#slash"/></svg></i><i></i><i></i><i class="b"></i><i class="b"></i><i class="b"></i></div></td><td><span class="select mode"><select aria-label="Mode 5"><option>Normal</option></select><svg><use href="#chev"/></svg></span></td><td><i class="bx"></i></td><td><span class="select trk"><select aria-label="Matte 5"><option>None</option></select><svg><use href="#chev"/></svg></span></td><td><div class="parent"><svg width="14" height="12"><use href="#spiral"/></svg><span class="select"><select aria-label="Parent 5"><option>None</option></select><svg><use href="#chev"/></svg></span></div></td><td></td></tr>
            <tr class="prop"><td colspan="4"><div class="keys"><svg class="off"><use href="#prev"/></svg><svg class="cur"><use href="#dia"/></svg><svg><use href="#next"/></svg></div></td><td colspan="2"><svg class="sw1" width="12" height="14"><use href="#watch"/></svg></td><td><div class="pn"><svg width="12" height="12"><use href="#graph"/></svg><span>Position</span></div></td><td colspan="4" class="val"><a href="#">1608.2</a>,<a href="#">241.2</a></td><td><svg class="pw" width="14" height="12"><use href="#spiral"/></svg></td><td></td></tr>

            <tr class="layer"><td><i class="bx"><svg width="12" height="10"><use href="#eye"/></svg></i></td><td></td><td><i class="bx"></i></td><td><i class="bx"></i></td><td><div class="lab"><svg width="9" height="9"><use href="#chev-r"/></svg><i class="chip violet"></i></div></td><td class="num">6</td><td><div class="src"><i class="kind"><svg width="12" height="12"><use href="#star"/></svg></i><span>Shape Layer 1</span></div></td><td><div class="switches"><i class="b"><svg width="12" height="11"><use href="#shy"/></svg></i><i class="b faint"><svg width="10" height="10"><use href="#sun"/></svg></i><i class="b"><svg width="11" height="12"><use href="#slash"/></svg></i><i class="b fx">fx</i><i></i><i class="b"></i><i class="b"></i><i class="b"></i></div></td><td><span class="select mode"><select aria-label="Mode 6"><option>Normal</option></select><svg><use href="#chev"/></svg></span></td><td><i class="bx"></i></td><td><span class="select trk"><select aria-label="Matte 6"><option>None</option></select><svg><use href="#chev"/></svg></span></td><td><div class="parent"><svg width="14" height="12"><use href="#spiral"/></svg><span class="select"><select aria-label="Parent 6"><option>None</option></select><svg><use href="#chev"/></svg></span></div></td><td></td></tr>
          </tbody>
        </table>
      </div>

      <div class="time-area">
        <div class="navi"><i></i><b></b><i class="r"></i></div>
        <div class="ruler"><div class="scale">
          <span style="left:0%">0:00s</span><span style="left:14.71%">01s</span><span style="left:29.41%">02s</span><span style="left:44.12%">03s</span><span style="left:58.82%">04s</span><span style="left:73.53%">05s</span><span style="left:88.24%">06s</span>
        </div></div>
        <div class="navi work"><i></i><b></b><i class="r"></i></div>
        <div class="cache"><i style="width:.5%"></i><i style="width:66%"></i></div>
        <div class="tracks">
          <div class="tr"><i class="bar violet"></i></div>
          <div class="tr sel"><i class="bar orange"></i></div>
          <div class="tr p"><div class="scale"><svg style="left:0%"><use href="#key"/></svg><svg style="left:34.1%"><use href="#key"/></svg></div></div>
          <div class="tr sel"><i class="bar orange"></i></div>
          <div class="tr p"><div class="scale"><svg style="left:0%"><use href="#key"/></svg><svg style="left:34.1%"><use href="#keyblue"/></svg></div></div>
          <div class="tr sel"><i class="bar orange"></i></div>
          <div class="tr p"><div class="scale"><svg style="left:0%"><use href="#key"/></svg><svg style="left:34.1%"><use href="#key"/></svg></div></div>
          <div class="tr sel"><i class="bar orange"></i></div>
          <div class="tr p"><div class="scale"><svg style="left:0%"><use href="#key"/></svg><svg style="left:34.1%"><use href="#key"/></svg></div></div>
          <div class="tr"><i class="bar violet"></i></div>
        </div>
        <div class="playhead"><svg width="13" height="15" viewBox="0 0 13 15"><path d="M0 0h13v7l-6.500 8L0 7z" fill="#2d8ceb"/><path d="M5 8h3" stroke="#104a8c"/></svg></div>
        <svg class="pointer" width="13" height="19" viewBox="0 0 13 19"><path d="M1 1v14l3.300-3 2.500 6 2.700-1.200L7 11h5z" fill="#111" stroke="#ddd" stroke-width="1.300"/></svg>
      </div>
      <div class="edge"><svg width="12" height="14" viewBox="0 0 12 14"><path d="M0 0h12v9l-6 5-6-5z" fill="#b0b0b0"/></svg><svg width="15" height="13" viewBox="0 0 15 13"><path d="M7 1 1 8M7 1v6" stroke="#aaa" stroke-width="1.300" fill="none"/><circle cx="6.500" cy="9" r="3" fill="none" stroke="#ccc" stroke-width="1.300"/><path d="M9 3h6v7h-5z" fill="#b0b0b0"/></svg></div>
    </div>
    <div class="tlfoot">
      <button class="blue" aria-label="Toggle switches"><svg width="12" height="12" viewBox="0 0 12 12"><path d="M5 5h6.300v6.300H5zM3 8.500V3h6M1 6.500V1h6" fill="none" stroke="currentColor" stroke-width="1.300"/><path d="M7 8h2.500" stroke="currentColor" stroke-width="1.500"/></svg></button><button class="blue" aria-label="Toggle modes"><svg width="12" height="12" viewBox="0 0 12 12"><circle cx="4.500" cy="4.500" r="3.700" fill="none" stroke="currentColor" stroke-width="1.300"/><path d="M5.500 5.500h6v6h-6z" fill="#232323" stroke="currentColor" stroke-width="1.300"/></svg></button><button aria-label="Toggle times"><svg width="12" height="12" viewBox="0 0 12 12"><path d="M4 0c-3 0-1 5-4 6 3 1 1 6 4 6zM8 0c3 0 1 5 4 6-3 1-1 6-4 6z" fill="currentColor"/><path d="M6 0v12" stroke="currentColor"/></svg></button>
      <div class="zoomer"><svg width="10" height="5" viewBox="0 0 10 5"><path d="m0 5 3-3 1 1 2-3 4 5z" fill="#aaa"/></svg><input type="range" min="0" max="100" value="0" aria-label="Zoom timeline"><svg width="16" height="8" viewBox="0 0 16 8"><path d="m0 8 4-6 1 2-3 4zM3 8l6-8 7 8z" fill="#aaa"/></svg></div>
    </div>
  </section>
</div>
</body>
</html>
```

FILE: styles.css
```css
* { box-sizing: border-box; }
body {
  margin: 0;
  padding: 0 5%;
  background: #000;
  color: #a0a0a0;
  font: 11px/16px "Noto Sans CJK SC", "Noto Sans", sans-serif;
}
h1, h2, p, ul { margin: 0; padding: 0; font-weight: 400; font-size: inherit; }
ul { list-style: none; }
i, b { font-style: normal; font-weight: 400; }
a { color: #2f97f0; text-decoration: none; }
svg { display: block; flex: none; }
.sprite { position: absolute; width: 0; height: 0; }
button {
  display: flex; align-items: center; justify-content: center;
  margin: 0; padding: 0; border: 0; background: none; color: inherit; font: inherit; white-space: nowrap;
}
input, select { font: inherit; color: inherit; margin: 0; }

.app { display: flex; flex-direction: column; min-height: 100vh; padding-left: 1px; background: #161616; }

/* system menu bar */
.menubar {
  display: flex; justify-content: space-between; height: 23px; background: #202020; color: #f0f0f0;
  font: 500 14px/22px Inter, "Liberation Sans", sans-serif; white-space: nowrap;
}
.menus { display: flex; padding-left: 11px; }
.menus button { padding: 0 9px; }
.menus .appname { font-size: 15px; font-weight: 700; }
.menus .apple { width: 35px; }
.apple svg { width: 14px; height: 17px; }
.status { display: flex; align-items: center; gap: 15px; padding-right: 23px; }
.st { display: flex; justify-content: center; width: 31px; margin-right: -15px; }
.battery { display: flex; align-items: center; gap: 5px; margin-left: 10px; font-size: 12px; }

.titlebar {
  display: grid; grid-template-columns: 1fr auto 1fr; align-items: center; height: 17px;
  background: linear-gradient(#dedede, #c9c9c9); border-radius: 5px 5px 0 0; color: #3c3c3c;
}
.titlebar h1 { font: 12px/17px Roboto, "Liberation Sans", sans-serif; }
.lights { display: flex; gap: 7px; padding-left: 5px; }
.lights i { width: 12px; height: 12px; border-radius: 50%; }
.red { background: radial-gradient(circle, #6b0f0a 2px, #f0574c 2px); }
.amber { background: #f7b023; }
.green { background: #28b83a; }

/* tool bar */
.toolbar { display: flex; align-items: center; height: 26px; margin-bottom: 2px; background: #232323; white-space: nowrap; }
.tools { display: flex; align-items: center; gap: 6px; padding-left: 3px; color: #b4b4b4; }
.grip { width: 2px; height: 18px; background: repeating-linear-gradient(#161616 0 1px, #333 1px 2px); }
.tg { display: flex; }
.tg button { width: 26px; height: 22px; position: relative; }
.tg.wide button { width: 28px; }
.tg svg { width: 18px; height: 18px; }
.tg.wide svg { width: 22px; }
.tg .dim { color: #4e4e4e; }
.tg .on { background: #131313; border-radius: 2px; color: #2d8ceb; }
.tg .more::after { content: ""; position: absolute; right: 2px; bottom: 1px; border: 2px solid transparent; border-right-color: #aaa; border-bottom-color: #aaa; }
.options { display: flex; align-items: center; height: 26px; margin-left: 27px; padding-left: 20px; border-left: 1px solid #1a1a1a; }
.modes { display: flex; margin-right: 22px; }
.modes button { width: 21px; height: 20px; border: 1px solid #1d1d1d; color: #1d4675; }
.modes .mask { color: #444; }
.swatchbtn { gap: 2px; margin-right: 12px; color: #2f97f0; }
.px { margin-right: 25px; }
.add { display: flex; align-items: center; gap: 4px; margin-right: 20px; }
.check { display: flex; align-items: center; gap: 4px; }
.check input { appearance: none; width: 14px; height: 14px; border-radius: 2px; background: #8c8c8c; display: grid; place-items: center; }
.check input::after { content: ""; width: 4px; height: 8px; border: solid #1c1c1c; border-width: 0 2px 2px 0; transform: rotate(40deg); }
.spaces { display: flex; flex: 1; align-items: center; gap: 45px; height: 26px; margin-left: 23px; padding: 0 9px 0 24px; border-left: 1px solid #181818; }
.spaces a { color: inherit; }
.spaces .cur { display: flex; align-items: center; gap: 11px; margin-right: -22px; color: #2f97f0; }
.overflow { margin-left: auto; color: #bbb; }
.help { display: flex; align-items: center; gap: 13px; padding: 0 6px; border-left: 1px solid #181818; height: 26px; }
.search { display: flex; align-items: center; gap: 9px; width: 198px; height: 19px; padding-left: 5px; background: #151515; border: 1px solid #2b2b2b; border-radius: 3px; color: #c8c8c8; }
.search input { flex: 1; min-width: 0; padding: 0; border: 0; background: none; }
::placeholder { color: #c8c8c8; opacity: 1; }

/* upper workspace */
.workspace { display: grid; grid-template-columns: 329px minmax(0, 1fr) 225px; gap: 5px; margin-bottom: 4px; }
.panel { display: flex; flex-direction: column; background: #232323; }
.tabs { display: flex; height: 28px; align-items: flex-start; color: #8f8f8f; }
.tab { display: flex; align-items: center; height: 27px; white-space: nowrap; }
.tab b { color: #a5a5a5; }
.tab.active { gap: 9px; border-bottom: 2px solid #cfcfcf; color: #dcdcdc; }
.tab.first { margin-left: 11px; padding-left: 2px; }
.tab svg { color: #a0a0a0; }
.fxtab { margin-left: 38px; gap: 11px; }
.sq { width: 11px; height: 11px; }
.sq.orange { background: #ee8d12; }
.sq.sand { background: #a8956a; }
.x { font-size: 12px; width: 8px; text-align: center; color: #999; }

.info { display: flex; gap: 5px; padding: 6px 6px 0; font-size: 10px; line-height: 13px; color: #8f8f8f; }
.thumb { width: 118px; height: 67px; background: #000; border: 1px solid #1a1a1a; }
.strong { display: flex; align-items: center; gap: 3px; font-size: 11px; font-weight: 500; color: #a0a0a0; }
.field { display: flex; align-items: center; height: 18px; background: #171717; border: 1px solid #292929; border-radius: 2px; padding-left: 6px; color: #bbb; }
.field input { flex: 1; min-width: 0; padding: 0; border: 0; background: none; }
.find { margin: 43px 7px 7px; height: 19px; }
.listhead { display: flex; align-items: center; justify-content: space-between; height: 20px; margin-right: 2px; padding: 0 8px 0 15px; background: #2c2c2c; border: solid #101010; border-width: 2px 0 1px; color: #8f8f8f; font-size: 10px; }
.listhead span { border-left: 2px solid #1a1a1a; padding-left: 5px; line-height: 12px; }
.items { margin-bottom: auto; }
.items li { display: grid; grid-template-columns: 18px 15px 1fr 18px; align-items: center; justify-items: start; height: 19px; border-bottom: 1px solid #1e1e1e; }
.items .nm { justify-self: stretch; margin-left: 2px; padding-left: 2px; font-weight: 500; line-height: 18px; }
.items .sel .nm { background: #959595; color: #1d1d1d; font-weight: 700; }
.items .tw { margin-left: 4px; }
.items .flow { margin-left: 2px; color: #b5b5b5; }
.pfoot { display: flex; align-items: center; height: 20px; border-top: 1px solid #141414; margin-right: 18px; color: #b0b0b0; }
.pfoot button { width: 25px; }
.pfoot .bpc { width: 46px; height: 16px; margin: 0 1px 0 4px; background: #1f1f1f; border: 1px solid #1b1b1b; font-size: 10px; line-height: 14px; color: #999; }
.hscroll { width: 80px; height: 16px; border-radius: 8px; background: #2f2f2f; }

.tab.comp { margin: 0 38px 0 11px; gap: 7px; padding-right: 1px; }
.comp .sq { margin: 0 3px 0 -1px; }
.comp svg { margin-right: 3px; }
.crumb { height: 25px; padding: 4px 20px 0; }
.crumb button { justify-content: flex-start; width: 70px; height: 16px; padding-left: 9px; background: #171717; color: #2f97f0; border-radius: 2px; }
.viewer { padding: 5px 0 4px; border: solid #0c0c0c; border-width: 2px 0 1px; background: #1d1d1d; }
.canvas { width: 79%; margin: 0 auto; height: auto; }
.vfoot { display: flex; align-items: center; height: 25px; padding-left: 1px; color: #b4b4b4; white-space: nowrap; }
.vfoot button { width: 22px; height: 22px; }
.vfoot .dim { color: #404040; }
.vfoot .boxed { background: #181818; border: 1px solid #141414; }
.box { height: 20px; line-height: 20px; background: #1d1d1d; border-radius: 2px; text-align: center; }
.time { width: 70px; margin: 0 2px; color: #999; }
.vfoot .exposure { width: auto; gap: 8px; margin-left: 6px; }
.exposure span { color: #2f97f0; }

/* drop-downs */
.select { display: grid; align-items: center; background: #1a1a1a; color: #c4c4c4; }
.select > * { grid-area: 1 / 1; }
.select select { appearance: none; width: 100%; height: 16px; padding: 0 18px 0 7px; border: 0; background: none; line-height: 16px; }
.select > svg { width: 10px; height: 10px; justify-self: end; margin-right: 5px; pointer-events: none; }
.vfoot .select { height: 20px; margin-right: 3px; }
.w70 { width: 70px; }
.w90 { width: 90px; }
.w110 { width: 110px; }
.w72 { width: 72px; }

/* right column */
.side { display: flex; background: #1c1c1c; }
.stack { width: 211px; background: #232323; }
.stack h2 { display: flex; align-items: center; justify-content: space-between; padding: 0 10px 0 12px; height: 31px; color: #cfcfcf; }
.stack h2.closed { height: 30px; border-bottom: 2px solid #191919; color: #a5a5a5; }
.stack h2 svg { color: #999; }
.tracker { height: 112px; border-bottom: 2px solid #191919; }
.btns { display: grid; grid-template-columns: 97px 97px; gap: 5px 3px; padding: 5px 8px 0; }
.btns button { height: 21px; border-radius: 11px; background: #262626; color: #4c4c4c; }
.source { display: flex; align-items: center; gap: 2px; padding: 5px 7px 0 10px; white-space: nowrap; }
.source label { width: 77px; }
.source .select { flex: 1; height: 20px; border: 1px solid #2a2a2a; border-radius: 2px; }
.cafbody { display: flex; flex-direction: column; padding: 0 19px 0 23px; color: #8a8a8a; font-size: 10px; line-height: 14px; }
.target { width: 162px; height: 91px; margin: 8px 0 8px 2px; background: repeating-conic-gradient(#c4c4c4 0 25%, #fff 0 50%) 0 0 / 33px 33px; }
.alpha { display: flex; align-items: center; justify-content: space-between; height: 16px; padding-right: 8px; }
.alpha output { color: #2f97f0; font-size: 11px; }
input[type="range"] { appearance: none; height: 12px; background: linear-gradient(#3c3c3c, #3c3c3c) 100% 50% / calc(100% - 14px) 2px no-repeat; }
input[type="range"]::-webkit-slider-thumb { appearance: none; width: 12px; height: 12px; border-radius: 50%; border: 2px solid #8c8c8c; background: #232323; }
.cafbody input { width: 163px; margin: 3px 0 8px; }
.big { height: 24px; margin: 3px 0 6px; border: 1px solid #2a2a2a; border-radius: 2px; font-size: 11px; }
.actions { display: grid; gap: 8px; padding-top: 6px; font-size: 11px; }
.pill { height: 24px; border: 1px solid #8a8a8a; border-radius: 12px; color: #8f8f8f; }
.hot { border-color: #f0f0f0; color: #f0f0f0; }
.vscroll { flex: 1; padding: 1px 2px 0 2px; }
.vscroll i { display: block; height: 263px; background: #2d2d2d; border-radius: 5px; }

/* timeline panel */
.timeline { flex: 1; display: flex; flex-direction: column; margin: 0 1px 1px 0; border: 1px solid #2474cc; background: #232323; }
.tltabs { display: flex; align-items: center; height: 27px; padding-left: 8px; color: #cfcfcf; }
.tltabs .sq { margin: 0 11px 0 9px; }
.tltabs svg { margin-left: 9px; }
.tlbody { flex: 1; display: flex; }
.layers { width: 935px; background: #232323; }
.controls { display: flex; align-items: center; height: 37px; }
.clock { width: 103px; text-align: center; white-space: nowrap; }
.clock strong { display: block; font-size: 15px; line-height: 17px; font-weight: 700; color: #2f97f0; }
.clock span { display: block; line-height: 14px; color: #2468a8; }
.controls .field { flex: 1; }
.sw { display: flex; gap: 8px; width: 209px; padding-left: 17px; color: #a8a8a8; }
.sw button { width: 18px; }
.sw button:nth-child(1), .sw button:nth-child(2), .sw button:nth-child(5) { margin-right: 8px; }

table { width: 935px; border-collapse: collapse; table-layout: fixed; }
.c15 { width: 15px; }
.c17 { width: 17px; }
.c19 { width: 19px; }
.c20 { width: 20px; }
.c33 { width: 33px; }
.c34 { width: 34px; }
.c81 { width: 81px; }
.c85 { width: 85px; }
.c121 { width: 121px; }
.c141 { width: 141px; }
.c335 { width: 335px; }
th, td { padding: 0; text-align: left; vertical-align: middle; font-weight: 400; white-space: nowrap; overflow: hidden; }
thead tr { height: 19px; background: #2c2c2c; box-shadow: inset 0 2px #101010, inset 0 -1px #101010; }
th { font-size: 10px; line-height: 14px; color: #959595; padding-top: 1px; }
th svg { color: #b0b0b0; margin: 0 auto; }
th.lk svg { margin-left: 3px; }
.tm { padding-left: 5px; }
.hd { display: flex; align-items: center; height: 11px; padding-left: 5px; border-left: 2px solid #191919; }
.hd .switches { margin-left: -3px; }
.switches { display: flex; width: 124px; margin-left: 4px; }
.switches i { display: grid; place-items: center; flex: 1; height: 16px; margin-right: 1px; }
.switches .b, .bx { background: rgba(0, 0, 0, .25); }
.faint { opacity: .6; }
.fx { font: italic 13px/14px "Liberation Serif", serif; color: #c0c0c0; }
.bx { display: grid; place-items: center; width: 13px; height: 15px; margin-left: 1px; }
td:first-child .bx { margin-left: 4px; }
.layer { height: 18px; background: #2a2a2a; color: #a8a8a8; box-shadow: inset 0 -1px #222; }
.layer.sel { background: #434343; }
.prop { height: 17px; background: #222; box-shadow: inset 0 -1px #1c1c1c; }
.lab { display: flex; align-items: center; gap: 4px; padding-left: 5px; }
.lab svg { width: 9px; }
.chip { width: 13px; height: 14px; }
.chip.violet { background: #5f6fe0; }
.chip.orange { background: #ee8d12; }
.num { padding-left: 7px; font-weight: 700; }
.src { display: flex; align-items: center; font-weight: 700; }
.src span { flex: 1; margin-left: 2px; padding-left: 3px; line-height: 16px; height: 16px; }
.kind { display: grid; place-items: center; width: 13px; height: 14px; margin-left: 4px; }
.null { background: #fff; outline: 1px solid #111; }
.src .lit { background: #959595; color: #1c1c1c; }
.src .framed { border: 1px solid #a8a8a8; line-height: 14px; padding-left: 2px; background: #3b3b3b; }
.mode { width: 78px; margin-left: 3px; }
.trk { width: 76px; margin-left: 2px; }
.layer .select { height: 16px; }
.parent { display: flex; align-items: center; gap: 6px; padding: 0 4px 0 5px; }
.parent .select { flex: 1; }
.keys { display: flex; gap: 6px; padding-left: 5px; }
.keys svg { width: 10px; height: 10px; }
.keys .off { color: #555; }
.keys .cur, .sw1 { color: #2d8ceb; }
.sw1 { margin-left: 55px; }
.pn { display: flex; align-items: center; padding-left: 6px; }
.pn span { flex: 1; margin-left: 6px; padding-left: 3px; line-height: 16px; }
.picked span { background: #434343; }
.val { padding-left: 7px; line-height: 16px; font-weight: 500; }
.pw { margin-left: 18px; }

.time-area { position: relative; flex: 1; display: flex; flex-direction: column; min-width: 0; padding-top: 5px; border-left: 1px solid #0c0c0c; background: #232323; overflow: hidden; }
.navi { display: flex; height: 11px; border: solid #111; border-width: 1px 0; background: #1d1d1d; }
.navi i { width: 7px; background: #2d8ceb; border-radius: 5px 0 0 5px; }
.navi .r { border-radius: 0 5px 5px 0; margin-left: 1px; }
.navi b { flex: 1; background: #5c5c5c; }
.work { height: 17px; }
.work b { background: #545454; border-top: 1px solid #6b6b6b; }
.ruler { height: 20px; padding: 0 8px 0 7px; }
.scale { position: relative; height: 100%; }
.scale span { position: absolute; bottom: 0; width: 30px; margin-left: -15px; text-align: center; font-size: 10px; line-height: 15px; padding-bottom: 5px; background: linear-gradient(#999, #999) 50% 100% / 1px 4px no-repeat; }
.cache { display: flex; justify-content: space-between; height: 4px; padding: 0 8px 0 7px; border-bottom: 1px solid #111; }
.cache i { background: #1fc41f; }
.tracks { flex: 1; background: linear-gradient(to right, #2d2d2d calc(100% - 8px), #252525 0); }
.tr { height: 18px; padding: 1px 8px 1px 7px; box-shadow: inset 0 -1px #1f1f1f; }
.tr.sel { background: linear-gradient(to right, transparent calc(100% - 8px), #434343 0); }
.tr.p { height: 17px; }
.bar { display: block; height: 16px; }
.bar.violet { background: #485084; border-top: 1px solid #525b94; }
.bar.orange { background: linear-gradient(#cc862e, #b87628); border-top: 1px solid #e8a850; }
.tr .scale svg { position: absolute; top: 2px; width: 10px; height: 10px; margin-left: -5px; }
.playhead { position: absolute; top: 21px; bottom: 0; left: 1px; width: 13px; background: linear-gradient(#2d7fe0, #2d7fe0) 50% 0 / 1px 100% no-repeat; }
.pointer { position: absolute; top: 25px; left: 12px; }
.edge { display: flex; flex-direction: column; align-items: center; gap: 7px; width: 17px; padding-top: 39px; background: #242424; }
.tlfoot { display: flex; align-items: center; height: 18px; padding-left: 3px; border-top: 2px solid #15150f; color: #aaa; }
.tlfoot button { width: 18px; }
.blue { color: #2d8ceb; }
.zoomer { display: flex; align-items: center; gap: 13px; margin-left: 883px; }
.zoomer input { width: 48px; }
```
